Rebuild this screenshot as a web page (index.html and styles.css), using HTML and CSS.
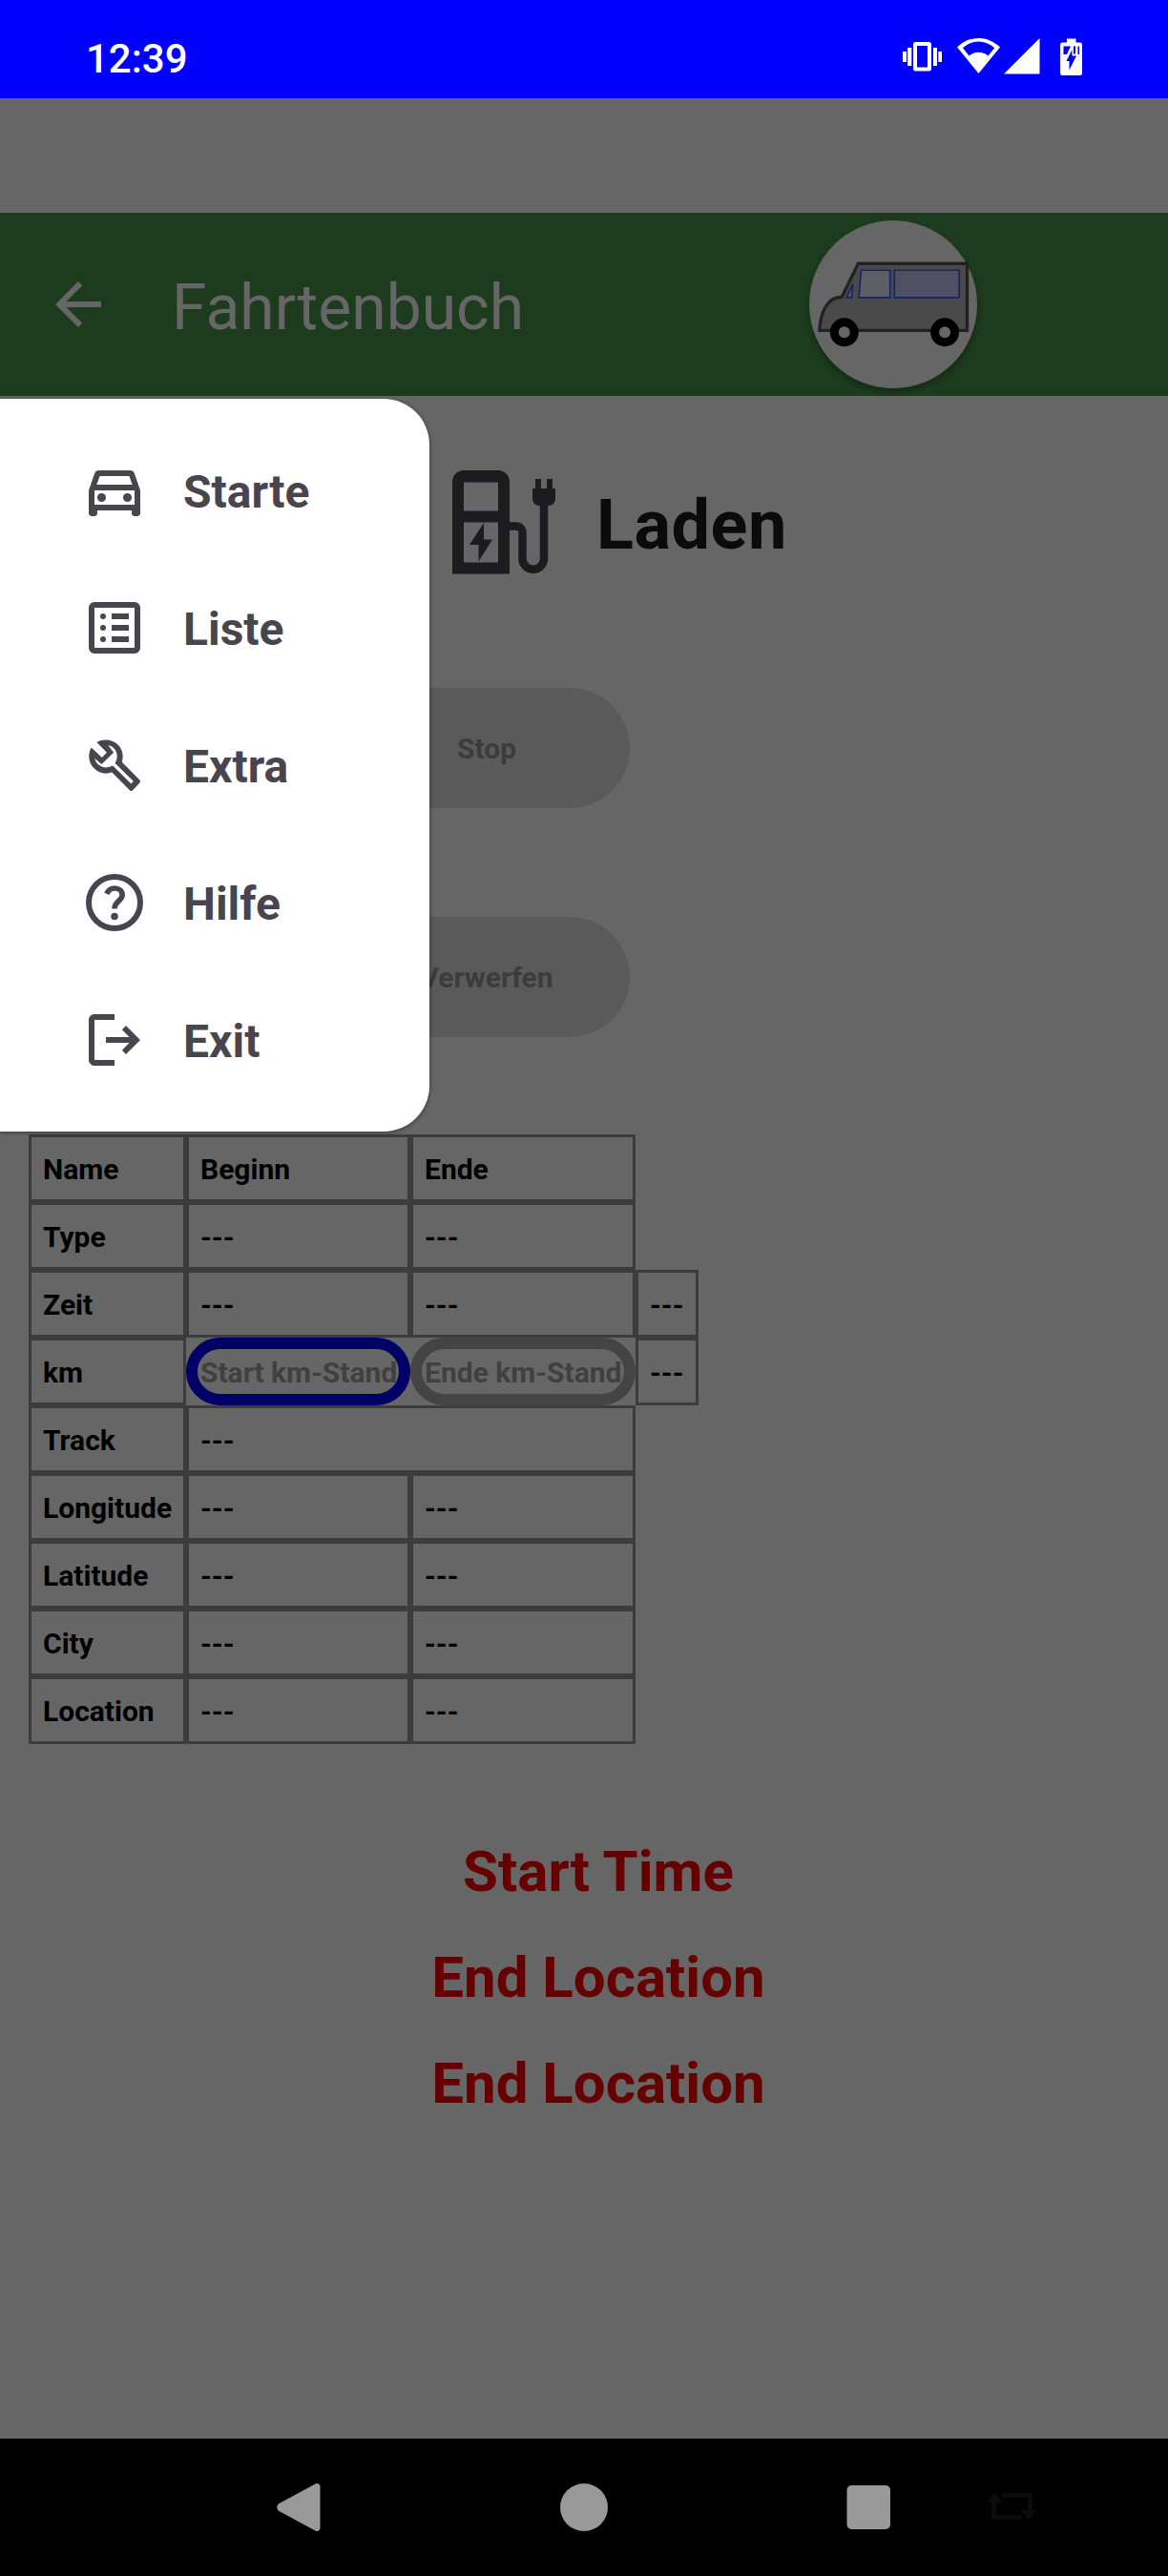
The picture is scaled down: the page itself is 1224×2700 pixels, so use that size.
FILE: index.html
```html
<!DOCTYPE html>
<html lang="de">
<head>
<meta charset="utf-8">
<title>Fahrtenbuch</title>
<link rel="stylesheet" href="styles.css">
</head>
<body>
<div class="screen">
  <header class="status">
    <span class="clock">12:39</span>
    <svg class="status-icons" viewBox="0 0 192 42" width="192" height="42">
      <g fill="#fff">
        <path d="M1 16h4v11H1zM6 12h4.300v19H6zM33 12h4v19h-4zM38.300 16H42v11h-3.700z"/>
        <path fill-rule="evenodd" d="M14.500 6h14a2.500 2.500 0 0 1 2.500 2.500v25.500a2.500 2.500 0 0 1-2.500 2.500h-14a2.500 2.500 0 0 1-2.500-2.500V8.500A2.500 2.500 0 0 1 14.500 6zM16 10v22.500h11V10z"/>
        <path fill-rule="evenodd" d="M58 11.500C71-1.300 90-1.300 103 11.500L80.500 39zM64 12.300l6.500 8.200c6-5 14-5 20 0l6.700-8.200C87 3.300 74 3.300 64 12.300z"/>
        <path d="M144.500 2v37.500H107z"/>
        <path fill-rule="evenodd" d="M173 2.500h9.500v4h4a2.500 2.500 0 0 1 2.500 2.500v29.500a2.500 2.500 0 0 1-2.500 2.500h-18a2.500 2.500 0 0 1-2.500-2.500V9a2.500 2.500 0 0 1 2.500-2.500h4.500zM169.500 10.500v8.500h3.500l4-8.500zM180 10.500v8h2v-8zM184.500 10.500v8.500h1.500v-8.500zM178.500 14l-6 12h3v9.500l7.500-15h-4.500z"/>
      </g>
    </svg>
  </header>

  <div class="appbar">
    <svg class="back" viewBox="0 0 24 24"><path d="M20 11H7.830l5.590-5.590L12 4l-8 8 8 8 1.410-1.410L7.830 13H20z"/></svg>
    <h1 class="title">Fahrtenbuch</h1>
    <div class="avatar">
      <svg viewBox="84 691 528 529" width="176" height="176">
        <path d="M238 827H581V1038H116C118 985 140 930 186 933z" fill="#4a4a4a" stroke="#222" stroke-width="10"/>
        <path d="M221 892l-3 42h-18z" fill="#50505f" stroke="#14246e" stroke-width="5"/>
        <path d="M247 848h91v86h-98z" fill="#5e5f64" stroke="#14246e" stroke-width="5"/>
        <path d="M352 848h204v86H352z" fill="#505064" stroke="#14246e" stroke-width="5"/>
        <circle cx="194" cy="1043.500" r="31.500" fill="#666" stroke="#000" stroke-width="27"/>
        <circle cx="510.500" cy="1043.500" r="31.500" fill="#666" stroke="#000" stroke-width="27"/>
      </svg>
    </div>
  </div>

  <main class="content">
    <div class="charge">
      <svg viewBox="0 0 108 109" width="108" height="109">
        <path fill-rule="evenodd" fill="#1c1b20" d="M12 0h36a12 12 0 0 1 12 12v96.500H0V12A12 12 0 0 1 12 0zM12 12.500v30h36v-30zM12 54.500v42h36v-42z"/>
        <path fill="#1c1b20" d="M33 55v17.500h9L27.500 95.500V78H18zM87 9h6v10h6V9h6v10h3v11a7 7 0 0 1-7 7h-10a7 7 0 0 1-7-7V19h3z"/>
        <path fill="none" stroke="#1c1b20" stroke-width="8.500" d="M60 58.500h7a6.500 6.500 0 0 1 6.500 6.500v27.500a11.250 11.250 0 0 0 22.500 0V36"/>
      </svg>
      <span class="charge-label">Laden</span>
    </div>
    <button class="pill">Stop</button>
    <button class="pill">Verwerfen</button>

    <div class="log">
      <div class="cell">Name</div><div class="cell">Beginn</div><div class="cell">Ende</div>
      <div class="cell first">Type</div><div class="cell">---</div><div class="cell">---</div>
      <div class="cell first">Zeit</div><div class="cell">---</div><div class="cell">---</div><div class="cell">---</div>
      <div class="cell first">km</div><div class="cell input active">Start km-Stand</div><div class="cell input">Ende km-Stand</div><div class="cell">---</div>
      <div class="cell first">Track</div><div class="cell wide">---</div>
      <div class="cell first">Longitude</div><div class="cell">---</div><div class="cell">---</div>
      <div class="cell first">Latitude</div><div class="cell">---</div><div class="cell">---</div>
      <div class="cell first">City</div><div class="cell">---</div><div class="cell">---</div>
      <div class="cell first">Location</div><div class="cell">---</div><div class="cell">---</div>
    </div>

    <div class="notes">
      <p>Start Time</p>
      <p>End Location</p>
      <p>End Location</p>
    </div>
  </main>

  <nav class="menu">
    <a class="item"><svg viewBox="0 0 24 24"><path d="M18.920 6.010C18.720 5.420 18.160 5 17.500 5h-11c-.66 0-1.210.42-1.420 1.010L3 12v8c0 .55.45 1 1 1h1c.55 0 1-.45 1-1v-1h12v1c0 .55.45 1 1 1h1c.55 0 1-.45 1-1v-8l-2.080-5.990zM6.850 7h10.290l1.080 3H5.780l1.070-3zM19 17H5v-5h14v5z"/><circle cx="7.500" cy="14.500" r="1.500"/><circle cx="16.500" cy="14.500" r="1.500"/></svg><span>Starte</span></a>
    <a class="item"><svg viewBox="0 0 24 24"><path d="M11 7h6v2h-6zm0 4h6v2h-6zm0 4h6v2h-6z"/><circle cx="8" cy="8" r="1"/><circle cx="8" cy="12" r="1"/><circle cx="8" cy="16" r="1"/><path fill-rule="evenodd" d="M5 3h14a2 2 0 0 1 2 2v14a2 2 0 0 1-2 2H5a2 2 0 0 1-2-2V5a2 2 0 0 1 2-2zM5 5v14h14V5z"/></svg><span>Liste</span></a>
    <a class="item"><svg viewBox="0 0 24 24"><path fill-rule="evenodd" d="M5.800 4C10 1.700 14.900 4.500 14.900 8.900C14.900 9.600 14.800 10.300 14.600 10.900L20.800 17.200Q21.200 17.700 20.800 18.200L18.300 20.800Q17.800 21.200 17.400 20.800L11.100 14.500C7 16 3.100 12.800 3.100 8.900C3.100 7.700 3.400 6.700 3.900 5.800L7.600 9.300L9.300 7.600zM9.800 5.100L11.700 7.600L7.500 11.700L5.100 9.700C5.600 12 8 13.200 10 12.700L11.400 12.200L17.800 18.500L18.600 17.600L12.200 11.300C13.800 8.800 12.600 5.500 9.800 5.100z"/></svg><span>Extra</span></a>
    <a class="item"><svg viewBox="0 0 24 24"><circle cx="12" cy="12" r="9" fill="none" stroke="currentColor" stroke-width="2"/><path d="M9.300 8.950C9.800 7.700 10.800 7 12.050 7c1.500 0 2.650.95 2.650 2.300 0 2.200-2.700 2.200-2.700 4.900" fill="none" stroke="currentColor" stroke-width="1.900"/><circle cx="12" cy="16.850" r="1.250"/></svg><span>Hilfe</span></a>
    <a class="item"><svg viewBox="0 0 24 24"><path d="M5 21c-.55 0-1.020-.2-1.410-.59C3.200 20.020 3 19.550 3 19V5c0-.55.2-1.020.59-1.410C3.980 3.200 4.450 3 5 3h7v2H5v14h7v2H5zm11-4l-1.370-1.450L17.180 13H9v-2h8.180l-2.550-2.550L16 7l5 5-5 5z"/></svg><span>Exit</span></a>
  </nav>

  <footer class="navbar">
    <svg viewBox="0 0 1224 144" width="1224" height="144">
      <g fill="#999">
        <path d="M335.500 50.500v43c0 3-3 4.500-6 2.500L292.500 76c-3-2-3-6 0-8L329.500 48c3-2 6-.5 6 2.500z"/>
        <circle cx="612" cy="72" r="25"/>
        <rect x="887.500" y="49" width="45.500" height="46" rx="5"/>
      </g>
      <g fill="none" stroke="#0c0c0c" stroke-width="4.500">
        <path d="M1050 59.500h29.500V77M1071 82.500h-29.500V66"/>
      </g>
      <path fill="#0c0c0c" d="M1034 67l8.500-10.500L1051 67zM1069.500 75h17L1078 85.500z"/>
    </svg>
  </footer>
</div>
</body>
</html>
```
FILE: styles.css
```css
* { box-sizing: border-box; }

body {
  margin: 0;
  background: #666;
  font-family: Roboto, "Liberation Sans", sans-serif;
}

.screen {
  position: relative;
  display: flex;
  flex-direction: column;
  width: 1224px;
  height: 2700px;
  overflow: hidden;
}

.status {
  display: flex;
  justify-content: space-between;
  height: 103px;
  padding: 38px 87px 0 90px;
  background: #00f;
}
.clock {
  color: #fff;
  font-size: 42px;
  font-weight: 500;
  line-height: 48px;
}

.appbar {
  display: flex;
  align-items: center;
  height: 192px;
  margin-top: 120px;
  padding-left: 46px;
  background: #1d3b1d;
}
.back { width: 72px; height: 72px; fill: #666; }
.title {
  width: 668px;
  margin: 0 0 0 62px;
  padding-top: 7px;
  color: #666;
  font-size: 66px;
  font-weight: 400;
  line-height: 78px;
}
.avatar {
  width: 176px;
  height: 176px;
  border-radius: 50%;
  background: #666;
  box-shadow: 0 4px 6px rgba(0, 0, 0, .3);
}
.avatar svg { display: block; }

.content {
  display: flex;
  flex: 1;
  flex-direction: column;
  align-items: flex-start;
}
.charge {
  display: flex;
  align-items: center;
  height: 109px;
  margin: 78px 0 119px 474px;
}
.charge-label {
  margin-left: 43px;
  padding-top: 7px;
  color: #0b0b0c;
  font-size: 72px;
  font-weight: 700;
  letter-spacing: .5px;
  line-height: 84px;
}

.pill {
  width: 300px;
  height: 126px;
  margin: 0 0 114px 360px;
  padding: 2px 0 0;
  border: 0;
  border-radius: 63px;
  background: #5a5a5a;
  color: #3c3c3c;
  font: 700 30px/36px Roboto, "Liberation Sans", sans-serif;
}
.pill + .pill { margin-bottom: 102px; }

.log {
  display: grid;
  grid-template-columns: 165px 235px 236px 66px;
  grid-auto-rows: 71px;
  margin-left: 30px;
}
.cell {
  padding: 17px 0 0 12px;
  border: 3px solid #3c3c3c;
  color: #000;
  font-size: 30px;
  font-weight: 700;
  line-height: 34px;
  white-space: nowrap;
}
.first { grid-column: 1; }
.wide { grid-column: span 2; }
.input {
  padding: 8px 0 0 3px;
  border: 12px solid #444;
  border-radius: 36px;
  color: #404040;
}
.active { border-color: #006; }

.notes {
  width: 400px;
  margin: 78px 0 0 427px;
  color: #600;
  font-size: 60px;
  font-weight: 700;
  line-height: 111px;
  text-align: center;
  white-space: nowrap;
}
.notes p { margin: 0; }

.menu {
  position: absolute;
  top: 418px;
  left: 0;
  width: 450px;
  height: 768px;
  padding: 24px 0;
  border-radius: 0 48px 48px 0;
  background: #fff;
  box-shadow: 0 1px 5px rgba(0, 0, 0, .45);
}
.item {
  display: flex;
  align-items: center;
  gap: 36px;
  height: 144px;
  padding-left: 84px;
  color: #49454f;
  font-size: 48px;
  font-weight: 700;
}
.item svg { width: 72px; height: 72px; fill: currentColor; }
.item span { padding-top: 3px; }

.navbar { height: 144px; background: #000; }
.navbar svg { display: block; }
```
